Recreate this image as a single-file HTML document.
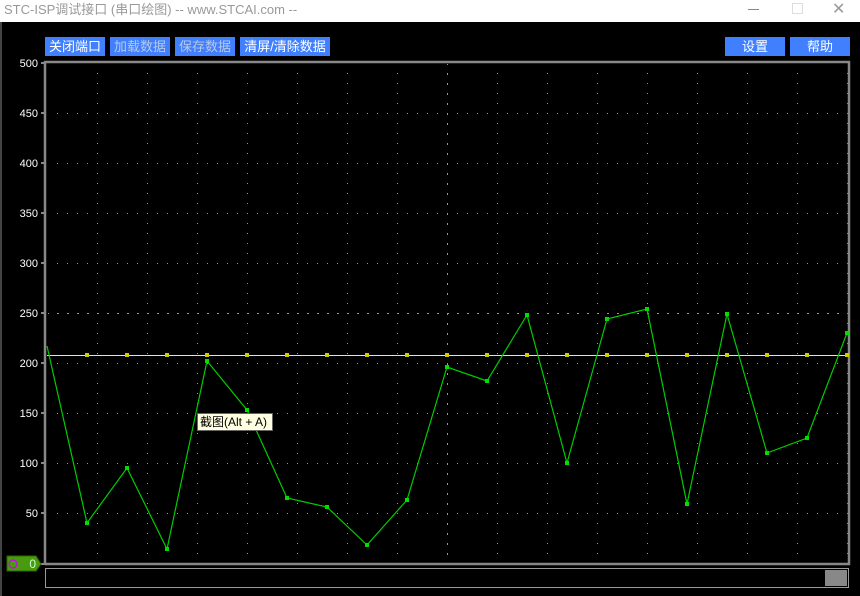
<!DOCTYPE html>
<html><head><meta charset="utf-8"><style>
body{margin:0;width:860px;height:596px;overflow:hidden;background:#000;font-family:"Liberation Sans","Noto Sans CJK SC",sans-serif}
.title{position:absolute;left:0;top:0;width:860px;height:22px;background:#fff;color:#999;font-size:13px;line-height:20px}
.title span{position:absolute;left:4px;top:0}
.btn{position:absolute;top:37px;height:19px;background:#4080ff;color:#fff;font-size:13px;line-height:19px;text-align:center}
.dim{color:#b8c8e8}
.lbl{position:absolute;left:0;width:38px;text-align:right;color:#fff;font-size:11px;line-height:12px}
</style></head><body>
<div class="title"><span>STC-ISP调试接口 (串口绘图) -- www.STCAI.com --</span>
<div style="position:absolute;left:748px;top:9px;width:11px;height:1px;background:#888"></div>
<div style="position:absolute;left:792px;top:3px;width:9px;height:9px;border:1px solid #ddd"></div>
<div style="position:absolute;left:832px;top:0;font-size:16px;color:#999">✕</div></div>
<div style="position:absolute;left:0;top:22px;width:2px;height:574px;background:#444"></div>
<div class="btn" style="left:45px;width:60px">关闭端口</div>
<div class="btn dim" style="left:110px;width:60px">加载数据</div>
<div class="btn dim" style="left:175px;width:60px">保存数据</div>
<div class="btn" style="left:240px;width:90px">清屏/清除数据</div>
<div class="btn" style="left:725px;width:60px">设置</div>
<div class="btn" style="left:790px;width:60px">帮助</div>
<div class="lbl" style="top:58px">500</div><div class="lbl" style="top:108px">450</div>
<div class="lbl" style="top:158px">400</div><div class="lbl" style="top:208px">350</div>
<div class="lbl" style="top:258px">300</div><div class="lbl" style="top:308px">250</div>
<div class="lbl" style="top:358px">200</div><div class="lbl" style="top:408px">150</div>
<div class="lbl" style="top:458px">100</div><div class="lbl" style="top:508px">50</div>
<svg width="860" height="596" style="position:absolute;left:0;top:0">
<defs>
<pattern id="r" x="7" y="13" width="10" height="50" patternUnits="userSpaceOnUse"><rect width="1" height="1" fill="#999"/></pattern>
<pattern id="c" x="47" y="3" width="50" height="10" patternUnits="userSpaceOnUse"><rect width="1" height="1" fill="#999"/></pattern>
</defs>
<rect x="48" y="64" width="800" height="499" fill="url(#r)"/>
<rect x="48" y="64" width="800" height="499" fill="url(#c)"/>
<line x1="447.5" y1="64" x2="447.5" y2="563" stroke="#999" stroke-dasharray="1,9"/>
<line x1="48" y1="313.5" x2="848" y2="313.5" stroke="#999" stroke-dasharray="1,9"/>
<g fill="#888"><rect x="41" y="62" width="5" height="2"/><rect x="41" y="112" width="5" height="2"/><rect x="41" y="162" width="5" height="2"/><rect x="41" y="212" width="5" height="2"/><rect x="41" y="262" width="5" height="2"/><rect x="41" y="312" width="5" height="2"/><rect x="41" y="362" width="5" height="2"/><rect x="41" y="412" width="5" height="2"/><rect x="41" y="462" width="5" height="2"/><rect x="41" y="512" width="5" height="2"/><rect x="41" y="563" width="5" height="2"/></g>
<path d="M45 564V62H849V564H45" fill="none" stroke="#888" stroke-width="2.5"/>
<rect x="47" y="355" width="801" height="1" fill="#ff0"/>
<g fill="#cc0"><rect x="85" y="353" width="4" height="4"/><rect x="125" y="353" width="4" height="4"/><rect x="165" y="353" width="4" height="4"/><rect x="205" y="353" width="4" height="4"/><rect x="245" y="353" width="4" height="4"/><rect x="285" y="353" width="4" height="4"/><rect x="325" y="353" width="4" height="4"/><rect x="365" y="353" width="4" height="4"/><rect x="405" y="353" width="4" height="4"/><rect x="445" y="353" width="4" height="4"/><rect x="485" y="353" width="4" height="4"/><rect x="525" y="353" width="4" height="4"/><rect x="565" y="353" width="4" height="4"/><rect x="605" y="353" width="4" height="4"/><rect x="645" y="353" width="4" height="4"/><rect x="685" y="353" width="4" height="4"/><rect x="725" y="353" width="4" height="4"/><rect x="765" y="353" width="4" height="4"/><rect x="805" y="353" width="4" height="4"/><rect x="845" y="353" width="4" height="4"/></g>
<polyline fill="none" stroke="#0c0" stroke-width="1.2" points="47,346 87,523 127,468 167,549 207,361 247,410 287,498 327,507 367,545 407,500 447,367 487,381 527,315 567,463 607,319 647,309 687,504 727,314 767,453 807,438 847,333"/>
<g fill="#0d0"><rect x="85" y="521" width="4" height="4"/><rect x="125" y="466" width="4" height="4"/><rect x="165" y="547" width="4" height="4"/><rect x="205" y="359" width="4" height="4"/><rect x="245" y="408" width="4" height="4"/><rect x="285" y="496" width="4" height="4"/><rect x="325" y="505" width="4" height="4"/><rect x="365" y="543" width="4" height="4"/><rect x="405" y="498" width="4" height="4"/><rect x="445" y="365" width="4" height="4"/><rect x="485" y="379" width="4" height="4"/><rect x="525" y="313" width="4" height="4"/><rect x="565" y="461" width="4" height="4"/><rect x="605" y="317" width="4" height="4"/><rect x="645" y="307" width="4" height="4"/><rect x="685" y="502" width="4" height="4"/><rect x="725" y="312" width="4" height="4"/><rect x="765" y="451" width="4" height="4"/><rect x="805" y="436" width="4" height="4"/><rect x="845" y="331" width="4" height="4"/></g>
<path d="M7 556H36L41 564L36 571H7Z" fill="#4a9a10" stroke="#2a6a00"/>
<circle cx="13" cy="564" r="4" fill="none" stroke="#c0f" stroke-width="1.2"/>
<text x="36" y="568" fill="#cfc" font-size="12" font-family="Liberation Sans" text-anchor="end">0</text>
<rect x="45.5" y="568.5" width="803" height="19" fill="none" stroke="#999"/>
<rect x="825" y="570" width="22" height="16" fill="#888"/>
</svg>
<div style="position:absolute;left:197px;top:413px;width:76px;height:18px;background:#ffffe1;border:1px solid #666;box-sizing:border-box;font-size:12px;line-height:16px;padding-left:2px;color:#000">截图(Alt + A)</div>
</body></html>
